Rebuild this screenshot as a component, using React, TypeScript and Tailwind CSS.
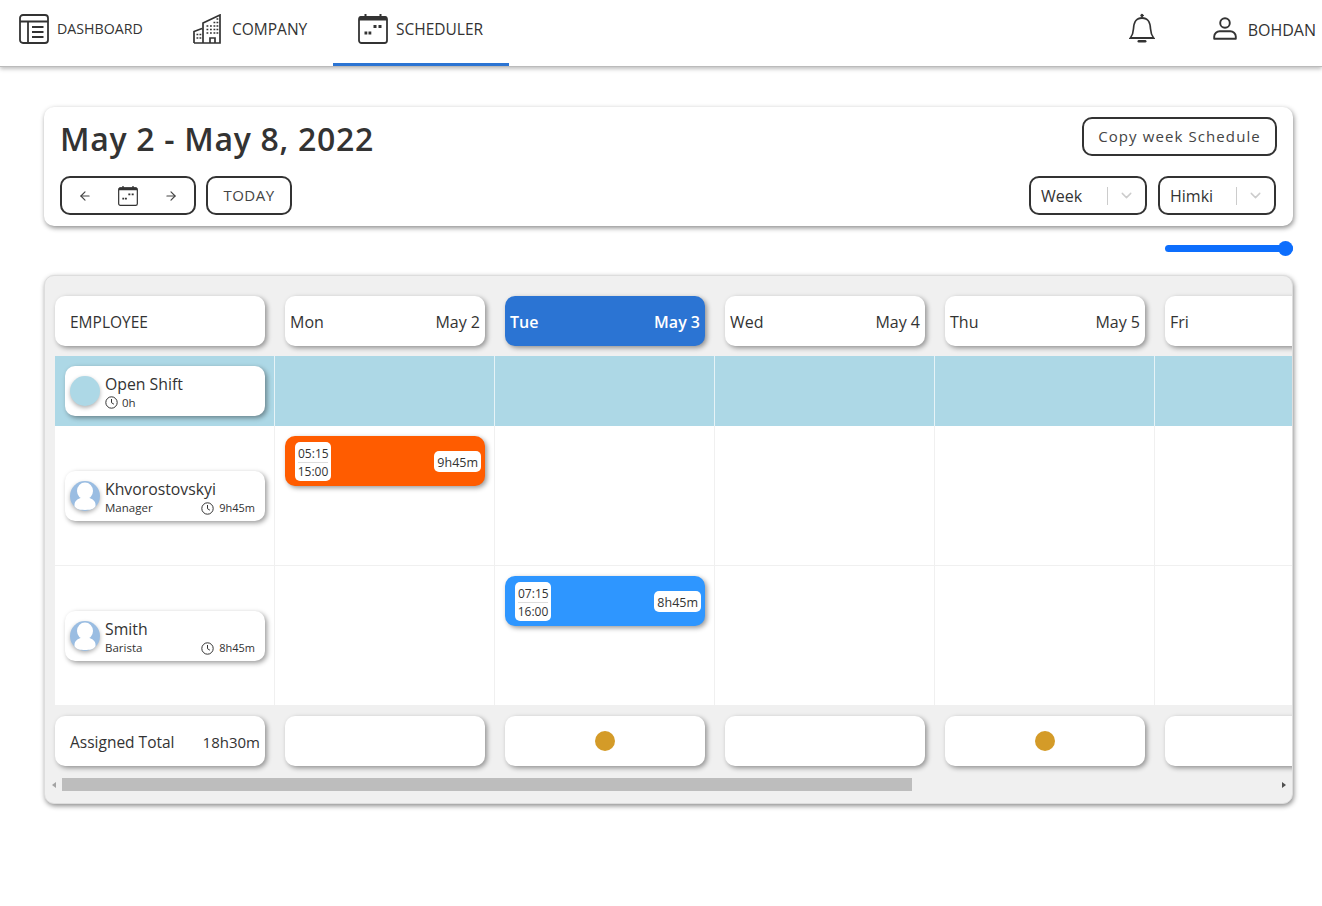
import { ArrowLeft, ArrowRight, ChevronDown } from 'lucide-react';

// Only what the window shows: Fri is cut by the scroll area, so its date stays out
const days = [
  { name: 'Mon', date: 'May 2' },
  { name: 'Tue', date: 'May 3', today: true },
  { name: 'Wed', date: 'May 4' },
  { name: 'Thu', date: 'May 5' },
  { name: 'Fri', date: '' },
];

const employees = [
  {
    name: 'Khvorostovskyi',
    role: 'Manager',
    total: '9h45m',
    shift: { day: 0, from: '05:15', to: '15:00', length: '9h45m', color: 'bg-[#ff5c00]' },
  },
  {
    name: 'Smith',
    role: 'Barista',
    total: '8h45m',
    shift: { day: 1, from: '07:15', to: '16:00', length: '8h45m', color: 'bg-[#2e96ff]' },
  },
];

const totals = [false, true, false, true, false];

function DashboardIcon() {
  return (
    <svg width="30" height="30" viewBox="0 0 30 30" fill="none" stroke="#333" strokeWidth="1.8">
      <rect x="1" y="1" width="28" height="28" rx="3" />
      <path d="M1 7.5h28M9 7.5V29M13 13h11.5M13 18h11.5M13 23h11.5" />
    </svg>
  );
}

function CompanyIcon() {
  return (
    <svg width="28" height="30" viewBox="0 0 28 30" fill="none" stroke="#333" strokeWidth="1.7">
      <path d="M1 29V17.500l8-3M10 29V9L27 1v28ZM1 29h9" />
      <path d="M17 29v-5h5v5" />
      <path
        d="M13.500 12h1.800M17 12h1.800M20.500 12h1.800M23.500 12h1.800M13.500 15.500h1.800M17 15.500h1.800M20.500 15.500h1.800M23.500 15.500h1.800M13.500 19h1.800M17 19h1.800M20.500 19h1.800M23.500 19h1.800M20.500 8.500h1.800M23.500 8.500h1.800M23.500 5h1.800M3.500 20.500h1.800M6.500 20.500h1.800M3.500 24h1.800M6.500 24h1.800"
        strokeWidth="1.6"
      />
    </svg>
  );
}

function CalendarIcon({ size }: { size: number }) {
  return (
    <svg width={size} height={size} viewBox="0 0 30 30" fill="none">
      <rect x="1" y="3" width="28" height="26" rx="2.5" stroke="#333" strokeWidth="1.8" />
      <path d="M1 3.500a2.500 2.500 0 0 1 2.500-1.500h23a2.500 2.500 0 0 1 2.500 1.500V6.500H1Z" fill="#333" />
      <path d="M7.500 0v3M22.500 0v3" stroke="#333" strokeWidth="2" />
      <path d="M6.500 19h2.800M10.500 19h2.800M15.500 12.500h3M20.500 12.500h3" stroke="#333" strokeWidth="2.800" />
    </svg>
  );
}

function BellIcon() {
  return (
    <svg className="mb-[2px]" width="26" height="30" viewBox="0 0 28 30" preserveAspectRatio="none" fill="none" stroke="#333" strokeWidth="1.8" strokeLinecap="round">
      <path d="M1.500 25h25c-2.200-2.500-3-4.500-3.300-9-.4-6-1.800-11-9.200-11S5.200 10 4.800 16c-.3 4.500-1.100 6.500-3.300 9Z" />
      <circle cx="14" cy="2.500" r="1.300" fill="#333" strokeWidth="1" />
      <path d="M10.500 28.200h7" strokeWidth="2.600" />
    </svg>
  );
}

function UserIcon() {
  return (
    <svg width="24" height="23" viewBox="0 0 24 23" fill="none" stroke="#333" strokeWidth="1.9">
      <circle cx="12" cy="6" r="4.800" />
      <path d="M1.200 21.800v-2.300c0-3.200 2.800-5.200 5.500-5.200h10.600c2.700 0 5.500 2 5.500 5.200v2.300Z" strokeLinejoin="round" />
    </svg>
  );
}

function ClockIcon() {
  return (
    <svg width="13" height="13" viewBox="0 0 13 13" fill="none" stroke="#333" strokeWidth="1">
      <circle cx="6.500" cy="6.500" r="5.700" />
      <path d="M6.500 3v3.700l2.400 1.500" />
    </svg>
  );
}

function Avatar() {
  return (
    <div className="h-[30px] w-[30px] shrink-0 overflow-hidden rounded-full bg-[#9abde2] shadow-[0_2px_4px_rgba(0,0,0,0.3)]">
      <svg width="30" height="30" viewBox="0 0 30 30" fill="#fff">
        <ellipse cx="15" cy="10" rx="8" ry="8.500" />
        <path d="M4.500 28v-4c0-4 3-6 6-7h9c3 1 6 3 6 7v4c-3 1.200-18 1.200-21 0Z" />
      </svg>
    </div>
  );
}

function Select({ label }: { label: string }) {
  return (
    <div className="flex h-[39px] w-[118px] items-center rounded-[10px] border-2 border-[#333] pl-[10px] text-[16px] font-medium text-[#333]">
      <span className="flex-1">{label}</span>
      <span className="h-[18px] w-px bg-[#ccc]" />
      <span className="flex w-[37px] justify-center">
        <ChevronDown size={17} color="#ccc" strokeWidth={2} />
      </span>
    </div>
  );
}

function Shift({ from, to, length, color }: { from: string; to: string; length: string; color: string }) {
  return (
    <div className={`flex h-[50px] w-[200px] items-center justify-between rounded-[10px] pl-[10px] pr-[4px] text-[12.500px] leading-[17px] text-[#333] shadow-[2px_2px_5px_rgba(0,0,0,0.4)] ${color}`}>
      <div className="flex h-[39px] w-[36px] flex-col items-center justify-center rounded-[5px] bg-white pt-[2px] text-[12px]">
        <span className="w-[30px] border-b border-[#ddd] text-center">{from}</span>
        <span>{to}</span>
      </div>
      <span className="rounded-[5px] bg-white px-[3px] pb-[1px] pt-[3px]">{length}</span>
    </div>
  );
}

export default function App() {
  return (
    <div className="min-h-screen bg-white font-['Open_Sans','Noto_Sans',sans-serif] text-[#333]">
      {/* Top nav */}
      <nav className="flex h-[67px] items-stretch border-b border-[#bbb] bg-white pr-[6px] font-medium shadow-[0_2px_4px_rgba(0,0,0,0.25)]">
        <a className="flex w-[168px] items-center gap-[8px] pb-[9px] pl-[19px] text-[14.200px]">
          <DashboardIcon />
          DASHBOARD
        </a>
        <a className="flex w-[165px] items-center gap-[11px] pb-[9px] pl-[25px] text-[15.500px]">
          <CompanyIcon />
          <span className="mt-[2px]">COMPANY</span>
        </a>
        <a className="flex w-[176px] items-center gap-[8px] border-b-[3px] border-[#2b74d3] pb-[6px] pl-[25px] text-[15.500px]">
          <CalendarIcon size={30} />
          <span className="mt-[2px]">SCHEDULER</span>
        </a>
        <div className="ml-auto flex items-center pb-[9px] text-[16px]">
          <BellIcon />
          <div className="ml-[58px] flex items-center gap-[11px]">
            <UserIcon />
            <span className="mt-[2px]">BOHDAN</span>
          </div>
        </div>
      </nav>

      <main className="pl-[44px] pr-[29px] pt-[40px]">
        {/* Week toolbar */}
        <section className="flex h-[119px] flex-col rounded-[10px] bg-white pl-[16px] pr-[16px] pt-[10px] shadow-[1px_2px_5px_rgba(0,0,0,0.45)]">
          <div className="flex h-[39px] items-center justify-between">
            <h1 className="h-[39px] text-[32px] font-[550] leading-[43px] tracking-[0.700px]">May 2 - May 8, 2022</h1>
            <button className="flex h-[39px] w-[195px] items-center justify-center rounded-[10px] border-2 border-[#333] text-[15px] tracking-[1.100px] text-[#444]">
              Copy week Schedule
            </button>
          </div>
          <div className="mt-[20px] flex items-center pr-px">
            <div className="flex h-[39px] w-[136px] items-center justify-between rounded-[10px] border-2 border-[#333] pl-[16px] pr-[16px]">
              <ArrowLeft size={14} color="#444" />
              <CalendarIcon size={20} />
              <ArrowRight size={14} color="#444" />
            </div>
            <button className="ml-[10px] h-[39px] w-[86px] rounded-[10px] border-2 border-[#333] text-[15px] tracking-[0.500px] text-[#444]">
              TODAY
            </button>
            <div className="ml-auto flex gap-[11px]">
              <Select label="Week" />
              <Select label="Himki" />
            </div>
          </div>
        </section>

        {/* Zoom slider */}
        <div className="mt-[15px] flex justify-end">
          <div className="relative flex h-[15px] w-[128px] items-center">
            <div className="h-[7px] w-full rounded-full bg-[#0d6efd]" />
            <div className="absolute right-0 top-0 h-[15px] w-[15px] rounded-full bg-[#0d6efd]" />
          </div>
        </div>

        {/* Scheduler */}
        <section className="mt-[19px] h-[529px] overflow-hidden rounded-[10px] border border-[#ddd] bg-[#f0f0f0] pl-[10px] pt-[20px] shadow-[1px_2px_5px_rgba(0,0,0,0.45)]">
          <div className="flex">
            <div className="w-[220px] shrink-0">
              <div className="flex h-[50px] w-[210px] items-center rounded-[10px] bg-white pl-[15px] pt-[3px] text-[15.500px] font-medium shadow-[2px_2px_5px_rgba(0,0,0,0.4)]">
                EMPLOYEE
              </div>
            </div>
            {days.map((d) => (
              <div key={d.name} className="w-[220px] shrink-0 pl-[10px]">
                <div
                  className={`flex h-[50px] w-[200px] items-center justify-between rounded-[10px] px-[5px] pt-[2px] text-[16px] shadow-[2px_2px_5px_rgba(0,0,0,0.4)] ${
                    d.today ? 'bg-[#2b74d3] font-semibold text-white' : 'bg-white font-medium'
                  }`}
                >
                  <span>{d.name}</span>
                  <span>{d.date}</span>
                </div>
              </div>
            ))}
          </div>

          {/* Open shift row */}
          <div className="mt-[10px] flex h-[70px] bg-[#add8e6]">
            <div className="flex w-[220px] shrink-0 items-center border-r border-[#e6f3f7] pl-[10px]">
              <div className="flex h-[50px] w-[200px] items-center rounded-[10px] bg-white pl-[5px] shadow-[2px_2px_5px_rgba(0,0,0,0.4)]">
                <div className="h-[30px] w-[30px] shrink-0 rounded-full bg-[#add8e6] shadow-[0_2px_4px_rgba(0,0,0,0.3)]" />
                <div className="ml-[5px] pt-[2px]">
                  <div className="text-[15.800px] font-medium leading-[20px]">Open Shift</div>
                  <div className="mt-px flex items-center gap-[4px] text-[11.500px] leading-[16px]">
                    <ClockIcon />
                    0h
                  </div>
                </div>
              </div>
            </div>
            {days.map((d) => (
              <div key={d.name} className="w-[220px] shrink-0 border-r border-[#e6f3f7]" />
            ))}
          </div>

          {/* Employee rows */}
          {employees.map((e) => (
            <div key={e.name} className="flex h-[140px] border-b border-[#f0f0f0] bg-white">
              <div className="flex w-[220px] shrink-0 items-center border-r border-[#f0f0f0] pl-[10px]">
                <div className="flex h-[50px] w-[200px] items-center rounded-[10px] bg-white pl-[5px] pr-[10px] shadow-[2px_2px_5px_rgba(0,0,0,0.4)]">
                  <Avatar />
                  <div className="ml-[5px] flex-1 pt-[4px]">
                    <div className="text-[15.800px] font-medium leading-[20px]">{e.name}</div>
                    <div className="mt-px flex items-center justify-between text-[11.500px] leading-[16px]">
                      <span>{e.role}</span>
                      <span className="flex items-center gap-[5px] text-[11px]">
                        <ClockIcon />
                        {e.total}
                      </span>
                    </div>
                  </div>
                </div>
              </div>
              {days.map((d, i) => (
                <div key={d.name} className="w-[220px] shrink-0 border-r border-[#f0f0f0] pl-[10px] pt-[10px]">
                  {e.shift.day === i && (
                    <Shift from={e.shift.from} to={e.shift.to} length={e.shift.length} color={e.shift.color} />
                  )}
                </div>
              ))}
            </div>
          ))}

          {/* Totals */}
          <div className="mt-[10px] flex">
            <div className="w-[220px] shrink-0">
              <div className="flex h-[50px] w-[210px] items-center justify-between rounded-[10px] bg-white pl-[15px] pr-[5px] pt-[2px] font-medium shadow-[2px_2px_5px_rgba(0,0,0,0.4)]">
                <span className="mt-[2px] text-[15.500px]">Assigned Total</span>
                <span className="text-[15px]">18h30m</span>
              </div>
            </div>
            {totals.map((hasDot, i) => (
              <div key={i} className="w-[220px] shrink-0 pl-[10px]">
                <div className="flex h-[50px] w-[200px] items-center justify-center rounded-[10px] bg-white shadow-[2px_2px_5px_rgba(0,0,0,0.4)]">
                  {hasDot && <div className="h-[20px] w-[20px] rounded-full bg-[#d49b28]" />}
                </div>
              </div>
            ))}
          </div>

          {/* Scrollbar */}
          <div className="-ml-[10px] mt-[12px] flex h-[13px] w-[1247px] items-center justify-between">
            <div className="flex w-[17px] justify-center">
              <div className="h-0 w-0 border-y-[3.500px] border-r-[4px] border-y-transparent border-r-[#a3a3a3]" />
            </div>
            <div className="h-[13px] w-[850px] bg-[#bdbdbd]" />
            <div className="ml-auto flex w-[17px] justify-center">
              <div className="h-0 w-0 border-y-[3.500px] border-l-[4px] border-y-transparent border-l-[#505050]" />
            </div>
          </div>
        </section>
      </main>
    </div>
  );
}
